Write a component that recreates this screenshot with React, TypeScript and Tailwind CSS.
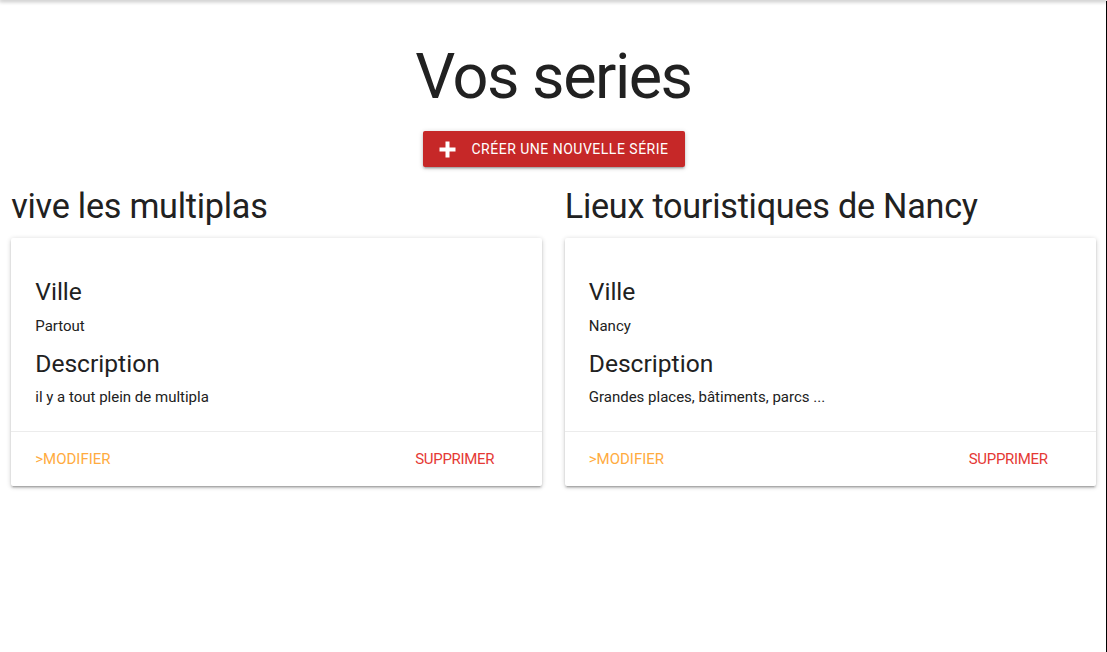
import React from "react";

const font = { fontFamily: 'Roboto, "Open Sans", sans-serif' };

type Serie = { titre: string; ville: string; description: string };

const series: Serie[] = [
  { titre: "vive les multiplas", ville: "Partout", description: "il y a tout plein de multipla" },
  { titre: "Lieux touristiques de Nancy", ville: "Nancy", description: "Grandes places, bâtiments, parcs ..." },
];

const shadow =
  "shadow-[0_2px_2px_0_rgba(0,0,0,0.14),0_3px_1px_-2px_rgba(0,0,0,0.12),0_1px_5px_0_rgba(0,0,0,0.2)]";

function Card({ s }: { s: Serie }) {
  return (
    <div className="px-[11.25px]">
      <h4 className="mt-0 mb-[12.8px] text-[34.2px] leading-[37.6px] tracking-[-0.25px]">{s.titre}</h4>
      <div className={"bg-white rounded-[2px] " + shadow}>
        <div className="px-6 pt-[40.2px] pb-[23.3px]">
          <h5 className="text-[24.6px] leading-[27px]">Ville</h5>
          <p className="mt-[9.1px] text-[15px] leading-[22.5px]">{s.ville}</p>
          <h5 className="mt-[13px] text-[24.6px] leading-[27px]">Description</h5>
          <p className="mt-[8.5px] text-[15px] leading-[22.5px]">{s.description}</p>
        </div>
        <div className="border-t border-[rgba(160,160,160,0.2)] px-6 pt-[15.7px] pb-[15.3px] flex justify-between">
          <a className="text-[#ffab40] text-[15px] leading-[22.5px] uppercase">&gt;Modifier</a>
          <a className="text-[#e53935] text-[15px] leading-[22.5px] uppercase tracking-[-0.3px] mr-6">Supprimer</a>
        </div>
      </div>
    </div>
  );
}

export default function App() {
  return (
    <div style={font} className="relative w-[1107px] h-[652px] bg-white text-[#212121] overflow-hidden">
      <div className="h-0 shadow-[0_0_4px_1px_rgba(0,0,0,0.45)]" />
      <div className="absolute right-0 top-[1px] bottom-0 w-px bg-black" />
      <h1 className="mt-[42px] text-center text-[63px] leading-[69.3px] font-normal tracking-[-1.5px]">Vos series</h1>
      <div className="mt-[20px] flex justify-center">
        <button className={"h-9 px-4 flex items-center bg-[#c62828] text-white text-[14px] tracking-[0.5px] uppercase rounded-[2px] " + shadow}>
          <svg width="17" height="17" viewBox="0 0 17 17" className="mr-4">
            <path d="M8.5 0.5v16M0.5 8.5h16" stroke="white" strokeWidth="4" />
          </svg>
          Créer une nouvelle série
        </button>
      </div>
      <div className="mt-[20.6px] grid grid-cols-2">
        {series.map((s) => (
          <Card key={s.titre} s={s} />
        ))}
      </div>
    </div>
  );
}
